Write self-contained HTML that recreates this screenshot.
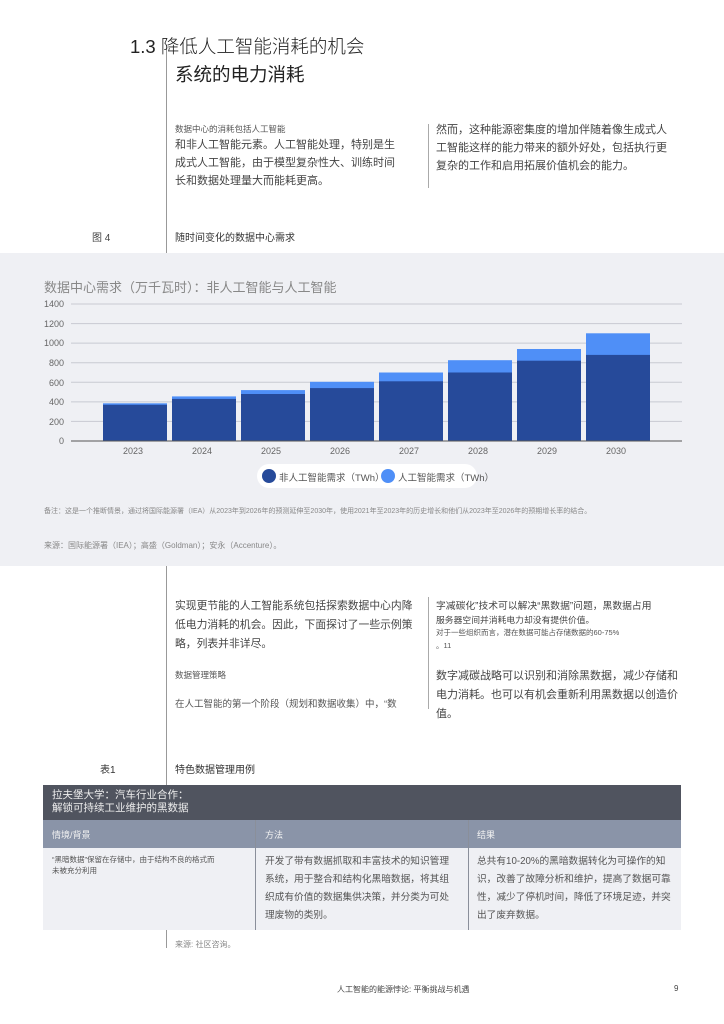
<!DOCTYPE html>
<html><head><meta charset="utf-8"><style>
*{margin:0;padding:0;box-sizing:border-box}
body{width:724px;height:1024px;background:#fff;position:relative;overflow:hidden;font-family:"Liberation Sans","Noto Sans CJK SC",sans-serif;color:#333}
.a{position:absolute;white-space:nowrap}
.p{font-size:11px;line-height:18px;color:#444}
.s{font-size:8.5px;color:#555}
</style></head><body>
<div class="a" style="left:166px;top:45px;width:1px;height:208px;background:#999"></div>
<div class="a" style="left:166px;top:566px;width:1px;height:219px;background:#999"></div>
<div class="a" style="left:166px;top:930px;width:1px;height:18px;background:#999"></div>
<div class="a" style="left:130px;top:33px;font-size:18.5px;color:#222;font-weight:300">1.3 降低人工智能消耗的机会</div>
<div class="a" style="left:175px;top:61px;font-size:18.5px;color:#222">系统的电力消耗</div>
<div class="a s" style="left:175px;top:123px">数据中心的消耗包括人工智能</div>
<div class="a p" style="left:175px;top:136px">和非人工智能元素。人工智能处理，特别是生<br>成式人工智能，由于模型复杂性大、训练时间<br>长和数据处理量大而能耗更高。</div>
<div class="a" style="left:428px;top:124px;width:1px;height:64px;background:#aaa"></div>
<div class="a p" style="left:436px;top:121px">然而，这种能源密集度的增加伴随着像生成式人<br>工智能这样的能力带来的额外好处，包括执行更<br>复杂的工作和启用拓展价值机会的能力。</div>
<div class="a" style="left:92px;top:229px;font-size:10px;color:#444">图 4</div>
<div class="a" style="left:175px;top:229px;font-size:10px;color:#333">随时间变化的数据中心需求</div>
<div class="a" style="left:0;top:253px;width:724px;height:313px;background:#eff0f4"></div>
<div class="a" style="left:44px;top:277px;font-size:13px;color:#888">数据中心需求（万千瓦时）：非人工智能与人工智能</div>
<svg class="a" style="left:0;top:290px" width="724" height="170" viewBox="0 290 724 170">
<g stroke="#c8cad2" stroke-width="1">
<line x1="71" y1="304" x2="682" y2="304"/><line x1="71" y1="323.6" x2="682" y2="323.6"/><line x1="71" y1="343.1" x2="682" y2="343.1"/><line x1="71" y1="362.7" x2="682" y2="362.7"/><line x1="71" y1="382.3" x2="682" y2="382.3"/><line x1="71" y1="401.9" x2="682" y2="401.9"/><line x1="71" y1="421.4" x2="682" y2="421.4"/></g>
<g font-size="9" fill="#666" text-anchor="end" font-family="Liberation Sans">
<text x="64" y="307">1400</text><text x="64" y="327">1200</text><text x="64" y="346">1000</text><text x="64" y="366">800</text><text x="64" y="386">600</text><text x="64" y="405">400</text><text x="64" y="425">200</text><text x="64" y="444">0</text></g>
<g>
<rect x="103" y="403.3" width="64" height="37.7" fill="#4f8ff7"/><rect x="103" y="404.8" width="64" height="36.2" fill="#264a9a"/>
<rect x="172" y="396.4" width="64" height="44.6" fill="#4f8ff7"/><rect x="172" y="398.9" width="64" height="42.1" fill="#264a9a"/>
<rect x="241" y="390.1" width="64" height="50.9" fill="#4f8ff7"/><rect x="241" y="394" width="64" height="47" fill="#264a9a"/>
<rect x="310" y="381.8" width="64" height="59.2" fill="#4f8ff7"/><rect x="310" y="388.1" width="64" height="52.9" fill="#264a9a"/>
<rect x="379" y="372.5" width="64" height="68.5" fill="#4f8ff7"/><rect x="379" y="381.3" width="64" height="59.7" fill="#264a9a"/>
<rect x="448" y="360.2" width="64" height="80.8" fill="#4f8ff7"/><rect x="448" y="372.5" width="64" height="68.5" fill="#264a9a"/>
<rect x="517" y="349" width="64" height="92" fill="#4f8ff7"/><rect x="517" y="360.7" width="64" height="80.3" fill="#264a9a"/>
<rect x="586" y="333.3" width="64" height="107.7" fill="#4f8ff7"/><rect x="586" y="354.9" width="64" height="86.1" fill="#264a9a"/>
</g>
<line x1="71" y1="441" x2="682" y2="441" stroke="#555" stroke-width="1"/>
</svg>
<div class="a" style="left:0;top:446px;width:724px;font-size:9px;color:#666">
<span class="a" style="left:123px">2023</span><span class="a" style="left:192px">2024</span><span class="a" style="left:261px">2025</span><span class="a" style="left:330px">2026</span><span class="a" style="left:399px">2027</span><span class="a" style="left:468px">2028</span><span class="a" style="left:537px">2029</span><span class="a" style="left:606px">2030</span></div>
<div class="a" style="left:257px;top:464px;width:220px;height:24px;background:#fff;border-radius:12px;font-size:9.5px;color:#555">
<span class="a" style="left:5px;top:5px;width:14px;height:14px;border-radius:50%;background:#264a9a"></span>
<span class="a" style="left:22px;top:6px">非人工智能需求（TWh）</span>
<span class="a" style="left:124px;top:5px;width:14px;height:14px;border-radius:50%;background:#4f8ff7"></span>
<span class="a" style="left:141px;top:6px">人工智能需求（TWh）</span></div>
<div class="a" style="left:44px;top:506px;font-size:7px;color:#888">备注：这是一个推断情景，通过将国际能源署（IEA）从2023年到2026年的预测延伸至2030年，使用2021年至2023年的历史增长和他们从2023年至2026年的预期增长率的结合。</div>
<div class="a" style="left:44px;top:540px;font-size:8px;color:#888">来源：国际能源署（IEA）；高盛（Goldman）；安永（Accenture）。</div>
<div class="a p" style="left:175px;top:597px;font-size:10.8px;line-height:19px">实现更节能的人工智能系统包括探索数据中心内降<br>低电力消耗的机会。因此，下面探讨了一些示例策<br>略，列表并非详尽。</div>
<div class="a s" style="left:175px;top:669px">数据管理策略</div>
<div class="a s" style="left:175px;top:696px;font-size:9.5px">在人工智能的第一个阶段（规划和数据收集）中，“数</div>
<div class="a" style="left:428px;top:597px;width:1px;height:112px;background:#aaa"></div>
<div class="a" style="left:436px;top:598px;font-size:9.8px;color:#444">字减碳化”技术可以解决“黑数据”问题，黑数据占用</div>
<div class="a" style="left:436px;top:613px;font-size:8.8px;color:#444">服务器空间并消耗电力却没有提供价值。</div>
<div class="a" style="left:436px;top:627px;font-size:7.5px;color:#555">对于一些组织而言，潜在数据可能占存储数据的60-75%</div>
<div class="a" style="left:436px;top:640px;font-size:7.5px;color:#555">。11</div>
<div class="a p" style="left:436px;top:667px;font-size:11px;line-height:19px">数字减碳战略可以识别和消除黑数据，减少存储和<br>电力消耗。也可以有机会重新利用黑数据以创造价<br>值。</div>
<div class="a" style="left:100px;top:761px;font-size:10px;color:#333">表1</div>
<div class="a" style="left:175px;top:761px;font-size:10px;color:#333">特色数据管理用例</div>
<div class="a" style="left:43px;top:785px;width:638px;height:35px;background:#50545f;color:#eee;font-size:10.5px;line-height:13px;padding:4px 9px">拉夫堡大学：汽车行业合作：<br>解锁可持续工业维护的黑数据</div>
<div class="a" style="left:43px;top:820px;width:638px;height:28px;background:#8a94a8"></div>
<div class="a" style="left:43px;top:848px;width:638px;height:82px;background:#eff0f4"></div>
<div class="a" style="left:255px;top:820px;width:1px;height:110px;background:#8a8f9a"></div>
<div class="a" style="left:468px;top:820px;width:1px;height:110px;background:#8a8f9a"></div>
<div class="a" style="left:52px;top:828px;font-size:9px;color:#f2f2f2">情境/背景</div>
<div class="a" style="left:265px;top:828px;font-size:9px;color:#f2f2f2">方法</div>
<div class="a" style="left:477px;top:828px;font-size:9px;color:#f2f2f2">结果</div>
<div class="a" style="left:52px;top:854px;font-size:7.5px;line-height:11px;color:#555">“黑暗数据”保留在存储中，由于结构不良的格式而<br>未被充分利用</div>
<div class="a" style="left:265px;top:853px;font-size:9.7px;line-height:18px;color:#555">开发了带有数据抓取和丰富技术的知识管理<br>系统，用于整合和结构化黑暗数据，将其组<br>织成有价值的数据集供决策，并分类为可处<br>理废物的类别。</div>
<div class="a" style="left:477px;top:853px;font-size:9.7px;line-height:18px;color:#555">总共有10-20%的黑暗数据转化为可操作的知<br>识，改善了故障分析和维护，提高了数据可靠<br>性，减少了停机时间，降低了环境足迹，并突<br>出了废弃数据。</div>
<div class="a" style="left:175px;top:939px;font-size:8px;color:#888">来源: 社区咨询。</div>
<div class="a" style="left:337px;top:984px;font-size:8px;color:#444">人工智能的能源悖论: 平衡挑战与机遇</div>
<div class="a" style="left:674px;top:984px;font-size:8px;color:#444">9</div>
</body></html>
